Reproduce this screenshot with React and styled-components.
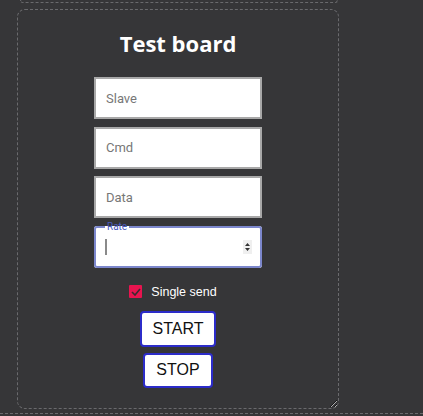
import React from 'react';
import styled, {createGlobalStyle} from 'styled-components';

const GlobalStyle = createGlobalStyle`
    html, body {
        margin: 0;
        background-color: #363638;
    }
    body {
        font-family: "Liberation Sans", Arial, sans-serif;
    }
`

const Page = styled.div`
    padding: 0 0 0 17px;
    width: 423px;
    box-sizing: border-box;
`
const PrevPanel = styled.div`
    width: 316px;
    height: 0;
    margin: 0 0 0 3px;
    padding-top: 2px;
    border: 1px dashed #6a6a6d;
    border-top: none;
    border-radius: 0 0 8px 8px;
`
const Panel = styled.div`
    width: 322px;
    height: 400px;
    margin-top: 6px;
    box-sizing: border-box;
    border: 1px dashed #6a6a6d;
    border-radius: 8px;
    padding-top: 19px;
    display: flex;
    flex-direction: column;
    align-items: center;
    overflow: auto;
    resize: both;
`
const NextPanel = styled.div`
    margin: 4px 0 0 -17px;
    width: 423px;
    border-top: 1px dashed #6a6a6d;
`
const Title = styled.h2`
    margin: 0 0 19px 0;
    font-family: "Open Sans", Lato, sans-serif;
    font-weight: 700;
    font-size: 22px;
    line-height: 29px;
    color: #fff;
`
const Fields = styled.div`
    display: flex;
    flex-direction: column;
    gap: 7.5px;
`
const Input = styled.input`
    width: 168px;
    height: 42px;
    box-sizing: border-box;
    border: 2px solid #a8a8a8;
    background: #fff;
    padding: 0 10px;
    font-family: Roboto, "Liberation Sans", sans-serif;
    font-size: 13px;
    outline: none;
    &::placeholder {
        color: #777;
    }
`
const Fieldset = styled.fieldset`
    width: 168px;
    height: 46px;
    margin: -4px 0 0 0;
    box-sizing: border-box;
    border: 2px solid #7c87cc;
    border-radius: 3px;
    background: #fff;
    padding: 0 8px 0 9px;
    display: flex;
    align-items: center;
    justify-content: space-between;
`
const Legend = styled.legend`
    font-family: Roboto, "Liberation Sans", sans-serif;
    font-size: 10px;
    line-height: 10px;
    color: #4a5bbf;
    padding: 0 2px;
    margin-left: 0;
`
const Caret = styled.span`
    width: 2px;
    height: 16px;
    margin-top: 7px;
    background: #8a8a8a;
`
const Spinner = styled.span`
    width: 9px;
    height: 14px;
    margin-top: 7px;
    background: #efefef;
    display: flex;
    align-items: center;
    justify-content: center;
`
const CheckRow = styled.label`
    display: flex;
    align-items: center;
    gap: 9px;
    margin: 17px 10px 0 0;
    color: #fff;
    font-size: 12.5px;
`
const Box = styled.span`
    width: 13px;
    height: 13px;
    background: #e8144f;
    border-radius: 1px;
    display: flex;
    align-items: center;
    justify-content: center;
`
const Button = styled.button`
    box-sizing: border-box;
    height: ${p => p.h}px;
    margin-top: ${p => p.mt}px;
    padding: 0 11px;
    background: #fff;
    border: 2px solid #2c2cc9;
    border-radius: 4px;
    font-family: "Liberation Sans", Arial, sans-serif;
    font-size: 16px;
    color: #111;
`

const App = () => {
    return (
        <Page>
            <GlobalStyle/>
            <PrevPanel/>
            <Panel>
                <Title>Test board</Title>
                <Fields>
                    <Input placeholder="Slave"/>
                    <Input placeholder="Cmd"/>
                    <Input placeholder="Data"/>
                    <Fieldset>
                        <Legend>Rate</Legend>
                        <Caret/>
                        <Spinner>
                            <svg width="7" height="10" viewBox="0 0 7 10">
                                <path d="M3.5 1 L6 4 L1 4 Z M3.5 9 L6 6 L1 6 Z" fill="#333"/>
                            </svg>
                        </Spinner>
                    </Fieldset>
                </Fields>
                <CheckRow>
                    <Box>
                        <svg width="10" height="8" viewBox="0 0 10 8">
                            <path d="M1 4 L4 7 L9 1" stroke="#3a2a30" strokeWidth="1.6" fill="none"/>
                        </svg>
                    </Box>
                    Single send
                </CheckRow>
                <Button h={36} mt={12}>START</Button>
                <Button h={35} mt={6}>STOP</Button>
            </Panel>
            <NextPanel/>
        </Page>
    )
}

export default App
